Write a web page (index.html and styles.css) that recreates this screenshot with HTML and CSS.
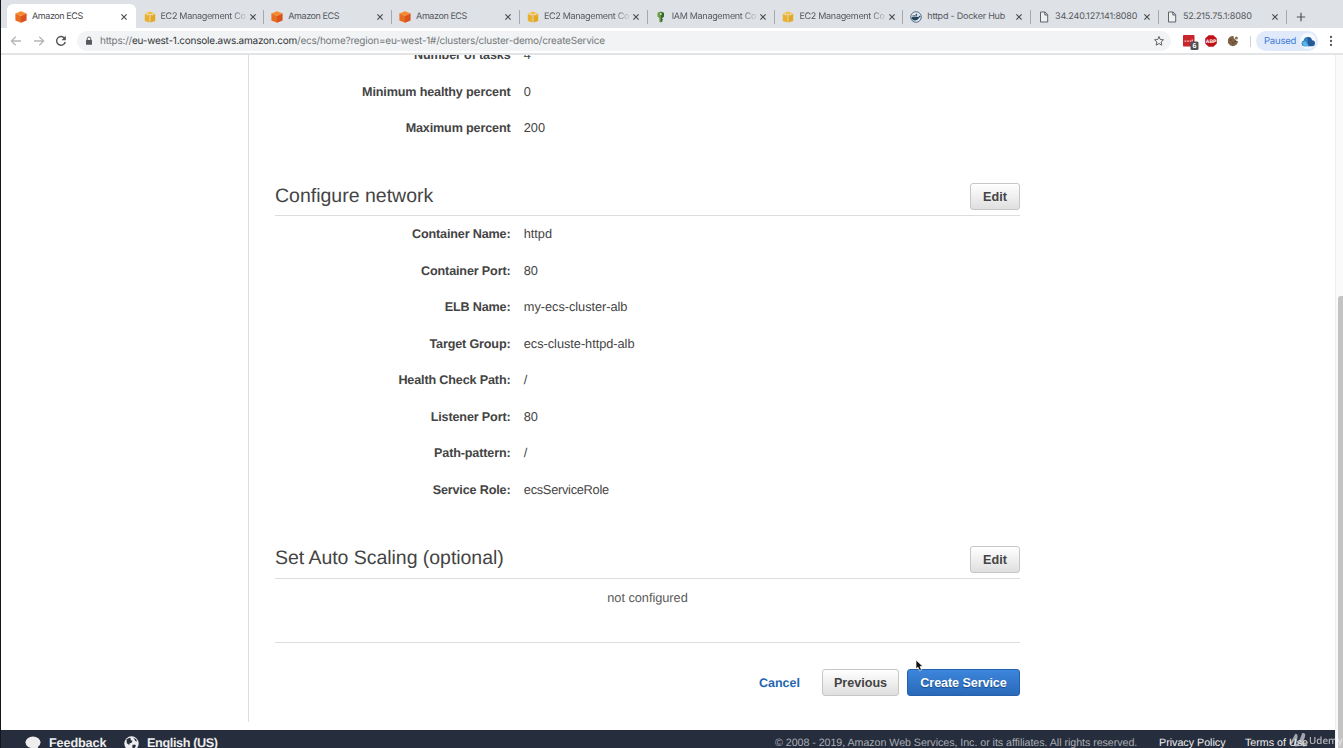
FILE: index.html
```
<!DOCTYPE html>
<html lang="en">
<head>
<meta charset="utf-8">
<title>Amazon ECS</title>
<link rel="stylesheet" href="styles.css">
</head>
<body>
<svg class="defs" width="0" height="0" aria-hidden="true">
  <symbol id="ecs" viewBox="0 0 12 12"><path fill="#f58a2a" d="M6 .3 11.6 2.5 6 5 .4 2.5z"/><path fill="#e96b1f" d="M.4 2.5 6 5v6.8L.4 9.6z"/><path fill="#d9531e" d="M11.6 2.5 6 5v6.8l5.6-2.2z"/></symbol>
  <symbol id="ec2" viewBox="0 0 12 12"><path fill="#f3bf45" d="M1 2.2 6 .5l5 1.7L6 3.6z"/><path fill="#eab02d" d="M.8 3 5.6 4.2v7.3L.8 10z"/><path fill="#e5a823" d="M11.2 3 6.4 4.2v7.3l4.8-1.5z"/><path d="M3.3 1.5v3M8.7 1.5v3" stroke="#f9dc90" stroke-width=".8"/></symbol>
  <symbol id="iam" viewBox="0 0 12 12"><path fill="#6a9d3b" d="M2.500 1.800 5.500.5v11L4.300 10.600V7L2.500 5.800z"/><path fill="#39692a" d="M5.500.5 9 1.800v4L7.200 7v1l1 .7-1 .8.4.8-2.100 1.200z"/><circle cx="5.800" cy="3" r="1" fill="#cfe0bd"/></symbol>
  <symbol id="docker" viewBox="0 0 12 12"><circle cx="6" cy="6" r="5.3" fill="#e4eaee" stroke="#44617a" stroke-width=".9"/><path fill="#254760" d="M1.5 6h6.8c.6 0 .7-.8.4-1.4 1 .1 1.2.8 1.9.9-.2.8-1 1-1.5 1C8.300 8.700 6.800 9.400 4.900 9.400 2.800 9.400 1.600 8.300 1.500 6zM2.600 4.300h1.300v1.200H2.600zm1.600 0h1.300v1.200H4.200zm1.600 0h1.300v1.200H5.800zM5.800 2.800h1.300V4H5.800z"/></symbol>
  <symbol id="file" viewBox="0 0 12 12"><path fill="#eef0f2" stroke="#5f6368" stroke-width="1" d="M2.500 1h4.600l2.600 2.700v7.300H2.500zM6.800 1v3h2.900"/></symbol>
  <symbol id="close" viewBox="0 0 8 8"><path d="m1.400 1.400 5.200 5.200m0-5.200L1.400 6.600" stroke="#4a4d51" stroke-width="1.150"/></symbol>
</svg>

<div class="window">
  <header class="tabs">
    <div class="tab active"><svg class="fav"><use href="#ecs"/></svg><span class="title tight">Amazon ECS</span><svg class="x"><use href="#close"/></svg></div>
    <div class="tab"><svg class="fav"><use href="#ec2"/></svg><span class="title fade">EC2 Management Co</span><svg class="x"><use href="#close"/></svg></div>
    <div class="tab"><svg class="fav"><use href="#ecs"/></svg><span class="title tight">Amazon ECS</span><svg class="x"><use href="#close"/></svg></div>
    <div class="tab"><svg class="fav"><use href="#ecs"/></svg><span class="title tight">Amazon ECS</span><svg class="x"><use href="#close"/></svg></div>
    <div class="tab"><svg class="fav"><use href="#ec2"/></svg><span class="title fade">EC2 Management Co</span><svg class="x"><use href="#close"/></svg></div>
    <div class="tab"><svg class="fav"><use href="#iam"/></svg><span class="title fade">IAM Management Co</span><svg class="x"><use href="#close"/></svg></div>
    <div class="tab"><svg class="fav"><use href="#ec2"/></svg><span class="title fade">EC2 Management Co</span><svg class="x"><use href="#close"/></svg></div>
    <div class="tab"><svg class="fav"><use href="#docker"/></svg><span class="title">httpd - Docker Hub</span><svg class="x"><use href="#close"/></svg></div>
    <div class="tab"><svg class="fav"><use href="#file"/></svg><span class="title num">34.240.127.141:8080</span><svg class="x"><use href="#close"/></svg></div>
    <div class="tab"><svg class="fav"><use href="#file"/></svg><span class="title num">52.215.75.1:8080</span><svg class="x"><use href="#close"/></svg></div>
    <div class="newtab"><svg width="10" height="10" viewBox="0 0 10 10"><path d="M5 .8v8.400M.8 5h8.400" stroke="#505357" stroke-width="1.200"/></svg></div>
  </header>

  <div class="toolbar">
    <nav class="nav">
      <svg width="12" height="12" viewBox="0 0 12 12"><path d="M11 6H1.500M5.700 1.700 1.400 6l4.300 4.300" fill="none" stroke="#b4b6b9" stroke-width="1.300"/></svg>
      <svg width="12" height="12" viewBox="0 0 12 12"><path d="M1 6h9.500M6.300 1.700 10.600 6l-4.300 4.300" fill="none" stroke="#b4b6b9" stroke-width="1.300"/></svg>
      <svg width="12" height="12" viewBox="0 0 12 12"><path d="M9.700 3.400A4.400 4.400 0 1 0 10.300 7" fill="none" stroke="#505357" stroke-width="1.400"/><path d="M10.800.8v4.400H6.400z" fill="#505357"/></svg>
    </nav>
    <div class="omnibox">
      <svg width="8" height="10" viewBox="0 0 8 10"><path d="M2.200 4.200V2.800a1.800 1.800 0 0 1 3.600 0v1.400" fill="none" stroke="#55585c" stroke-width="1"/><rect x="1" y="3.900" width="6" height="4.900" rx=".5" fill="#55585c"/></svg>
      <span class="url">https://<b>eu-west-1.console.aws.amazon.com</b>/ecs/home?region=eu-west-1#/clusters/cluster-demo/createService</span>
      <svg class="star" width="12" height="12" viewBox="0 0 12 12"><path d="m6 1.500 1.300 3 3.200.3-2.400 2.200.7 3.200L6 8.500l-2.800 1.700.7-3.200-2.400-2.200 3.200-.3z" fill="none" stroke="#5f6368" stroke-width="1"/></svg>
    </div>
    <div class="ext">
      <svg width="16" height="16" viewBox="0 0 16 16"><rect width="11.500" height="11.500" y="1" rx=".8" fill="#c9252d"/><path d="M1.500 7.200h1.800m.8 0h1.800m.8 0h1.500m1-1.700v2" stroke="#f3c1c1" stroke-width="1.200"/><rect x="7.500" y="7.500" width="8" height="8.500" rx="1.500" fill="#4f5355"/><text class="count" x="9.600" y="14.300">6</text></svg>
      <svg width="12" height="12" viewBox="0 0 12 12"><path fill="#c01018" d="M3.600.2h4.800l3.400 3.400v4.800l-3.400 3.400H3.600L.2 8.400V3.600z"/><text class="abp" x=".8" y="7.900">ABP</text></svg>
      <svg width="12" height="12" viewBox="0 0 12 12"><path fill="#806344" d="M6.500 1A5.100 5.100 0 1 0 11 6.300L9.500 5.800 8.200 4.500 6.800 3z"/><circle cx="9.400" cy="3" r="1.500" fill="#8b7355"/><path d="M3 5h1.500M5 8h1.500M7.500 6.500H9" stroke="#4b3826" stroke-width="1.200"/></svg>
    </div>
    <div class="profile"><span>Paused</span><i><svg width="14" height="11" viewBox="0 0 14 11"><path fill="#2f83c9" d="M3 10.200A2.900 2.900 0 0 1 2.700 4.500 4 4 0 0 1 7 1v9.200z"/><path fill="#245a9b" d="M6.500 1.100A3.900 3.900 0 0 1 11 4.200a3 3 0 0 1 0 6H7z"/><path fill="#5bb3e6" d="M1 6.500 4.500 5l3.400 5.200H3z"/></svg></i></div>
    <svg class="menu" width="4" height="12" viewBox="0 0 4 12"><g fill="#55585c"><circle cx="2" cy="2" r="1.150"/><circle cx="2" cy="6" r="1.150"/><circle cx="2" cy="10" r="1.150"/></g></svg>
  </div>

  <div class="viewport">
    <div class="page">
      <div class="columns">
        <aside class="side"></aside>
        <main class="content">
          <dl class="rows top">
            <dt>Number of tasks</dt><dd>4</dd>
            <dt>Minimum healthy percent</dt><dd>0</dd>
            <dt>Maximum percent</dt><dd>200</dd>
          </dl>
          <div class="section-head"><h2>Configure network</h2><button class="btn edit">Edit</button></div>
          <dl class="rows">
            <dt>Container Name:</dt><dd>httpd</dd>
            <dt>Container Port:</dt><dd>80</dd>
            <dt>ELB Name:</dt><dd>my-ecs-cluster-alb</dd>
            <dt>Target Group:</dt><dd>ecs-cluste-httpd-alb</dd>
            <dt>Health Check Path:</dt><dd>/</dd>
            <dt>Listener Port:</dt><dd>80</dd>
            <dt>Path-pattern:</dt><dd>/</dd>
            <dt>Service Role:</dt><dd class="role">ecsServiceRole</dd>
          </dl>
          <div class="section-head second"><h2>Set Auto Scaling (optional)</h2><button class="btn edit">Edit</button></div>
          <p class="empty">not configured</p>
          <div class="actions"><a class="cancel">Cancel</a><button class="btn prev">Previous</button><button class="btn primary">Create Service</button></div>
        </main>
      </div>
      <footer class="footer">
        <svg class="bubble" width="16" height="15" viewBox="0 0 16 15"><ellipse cx="8" cy="6.300" rx="7.500" ry="5.900" fill="#eee"/><path d="m9 11 4.500 3-1-5z" fill="#eee"/></svg>
        <span class="feedback">Feedback</span>
        <svg class="globe" width="15" height="15" viewBox="0 0 15 15"><circle cx="7.500" cy="7.500" r="7.200" fill="#eee"/><path fill="#2a3040" d="m2.500 3.200 3-1.500 1.500.8-.5 1.500 2 .8-.9 2-2.100.6-.2 1.700L2.800 7.300zM9 1.400l3.200 1.800.8 2.300-1.700-.5-.9-1.700zM8.300 9l2.500-.5 1.200 1.200-2 3.500-1.500-1z"/></svg>
        <span class="lang">English (US)</span>
        <span class="copy">© 2008 - 2019, Amazon Web Services, Inc. or its affiliates. All rights reserved.</span>
        <span class="privacy">Privacy Policy</span>
        <span class="terms">Terms of Use</span>
      </footer>
    </div>
    <div class="scroll"><div class="thumb"></div></div>
  </div>
  <div class="watermark"><svg width="19" height="16" viewBox="0 0 19 16"><path d="M1 12c3-2 4-6 6-9 2 1-1 6-1 9 0 3 3 1 5-2l3-8c3 0-1 6-1 9 0 3 3 3 4 1" fill="none" stroke="#e4e6e9" stroke-width="2.200"/></svg><span>Udemy</span></div>
  <svg class="cursor" width="10" height="14" viewBox="0 0 10 14"><path d="M1 1v9l2-1.800 1.500 3.500 2-.9L5 7.500h3z" fill="#111" stroke="#fff" stroke-width=".7"/></svg>
</div>
</body>
</html>
```
FILE: styles.css
```
* { box-sizing: border-box; }
body { margin: 0; font-family: "Liberation Sans", Arial, sans-serif; color: #444; overflow: hidden; text-rendering: geometricPrecision; }
svg { display: block; flex: none; }
.defs { position: absolute; }
.window { position: relative; display: flex; flex-direction: column; width: 1343px; height: 748px; border-left: 1px solid #14161b; background: #fff; overflow: hidden; }

.tabs { display: flex; flex: none; height: 28px; padding-left: 6px; background: #dee1e6; font-family: Inter, sans-serif; }
.tab { display: flex; align-items: center; flex: none; width: 127.800px; height: 28px; padding: 5px 7px 0 8px; position: relative; }
.tab::after { content: ""; position: absolute; right: -1px; top: 10px; width: 1px; height: 14px; background: #a6a9ae; }
.tab.active { width: 128.500px; height: 24px; margin-top: 4px; padding: 1px 8px 0 8px; background: #fff; border-radius: 6px 6px 0 0; }
.tab.active::after { display: none; }
.fav { width: 12px; height: 12px; margin-right: 5px; }
.title { flex: 1; font-size: 9px; line-height: 12px; letter-spacing: -.22px; color: #55585d; white-space: nowrap; }
.title.tight { letter-spacing: -.42px; }
.title.fade { letter-spacing: -.3px; }
.title.num { letter-spacing: -.15px; }
.active .title { color: #45484c; }
.fade { -webkit-mask-image: linear-gradient(90deg, #000 82%, rgba(0,0,0,.2)); mask-image: linear-gradient(90deg, #000 82%, rgba(0,0,0,.2)); }
.x { width: 8px; height: 8px; margin-left: 3px; }
.newtab { padding: 12px 0 0 10px; }

.toolbar { display: flex; flex: none; align-items: center; height: 27px; padding: 1px 0 0 9px; border-bottom: 2px solid #e3e4e5; background: #fff; font-family: Inter, sans-serif; }
.nav { display: flex; gap: 10.500px; width: 67px; }
.omnibox { display: flex; align-items: center; width: 1094px; height: 20px; padding: 0 6px 0 8px; border-radius: 10px; background: #f1f3f4; }
.url { flex: 1; padding-left: 7px; font-size: 10px; line-height: 20px; letter-spacing: -.225px; color: #73777b; white-space: nowrap; }
.url b { font-weight: 400; color: #33363a; }
.ext { display: flex; align-items: center; gap: 10px; width: 68px; margin-left: 12px; }
.ext svg:first-child { margin: 2px -4px 0 0; }
.count { font: bold 7px "Liberation Sans", sans-serif; fill: #fff; }
.abp { font: bold 5px "Liberation Sans", sans-serif; fill: #fff; }
.profile { display: flex; align-items: center; justify-content: space-between; width: 62px; height: 20px; margin-left: 5px; padding: 0 2px 0 8px; border-radius: 10px; background: #e1eafb; color: #3d7bd8; font-size: 9.500px; letter-spacing: -.2px; position: relative; }
.profile::before { content: ""; position: absolute; left: -6px; top: 5px; width: 1px; height: 11px; background: #cfd1d4; }
.profile i { display: flex; align-items: center; justify-content: center; width: 16px; height: 16px; border-radius: 50%; background: #f5f8fd; }
.menu { margin-left: 11px; }

.viewport { display: flex; flex: 1; min-height: 0; overflow: hidden; }
.page { display: flex; flex-direction: column; width: 1334px; }
.columns { display: flex; flex: none; height: 667px; }
.side { width: 248px; border-right: 1px solid #ddd; }
.content { width: 771px; padding-left: 26px; }
.rows { display: grid; grid-template-columns: 235.500px 1fr; column-gap: 13.300px; grid-auto-rows: 36.570px; margin: 0; font-size: 12.800px; line-height: 18px; }
.rows.top { height: 123px; margin-top: -9px; }
.rows dt { font-weight: 700; text-align: right; font-size: 12.600px; letter-spacing: -.15px; }
.rows dd { margin: 0; letter-spacing: -.05px; }
.rows .role { letter-spacing: -.28px; }
.section-head { display: flex; justify-content: space-between; height: 47px; border-bottom: 1px solid #ddd; }
.section-head.second { height: 48px; }
.section-head + .rows { padding-top: 9px; height: 315px; }
.section-head h2 { margin: 14px 0 0; font-size: 19.500px; line-height: 26px; font-weight: 400; }
.second h2 { letter-spacing: -.04px; }
.btn { display: block; height: 27px; padding: 1px 0 0; border: 1px solid #c6c6c6; border-radius: 3px; background: linear-gradient(#fff, #dfdfdf); color: #444; font: bold 12.600px/24px "Liberation Sans", sans-serif; }
.edit { width: 50px; margin-top: 14px; }
.second .edit { margin-top: 15px; }
.empty { height: 64px; margin: 0; padding-top: 10px; border-bottom: 1px solid #ddd; text-align: center; font-size: 12.800px; letter-spacing: -.05px; line-height: 18px; color: #5b5b5b; }
.actions { display: flex; justify-content: flex-end; padding-top: 26px; }
.cancel { margin-right: 22px; font-size: 12.500px; line-height: 28px; font-weight: 700; color: #1f66b0; }
.prev { width: 77px; margin-right: 8px; }
.primary { width: 113px; border-color: #2460ab; background: linear-gradient(#3c86dc, #2a69b9); color: #fff; letter-spacing: -.08px; text-shadow: 0 1px 1px #174a87; }

.footer { display: flex; flex: none; align-items: flex-start; height: 30px; margin-top: 8px; padding-left: 24px; background: #262d3d; color: #eee; font-size: 12.700px; line-height: 16px; white-space: nowrap; }
.bubble { margin-top: 6px; }
.globe { margin-top: 6px; margin-left: 16px; }
.feedback, .lang { padding: 5px 0 0 8px; font-weight: 700; letter-spacing: -.15px; }
.feedback { width: 67px; }
.lang { width: 636px; letter-spacing: -.4px; }
.copy, .privacy, .terms { padding-top: 5px; font-size: 10.700px; }
.copy { width: 384px; letter-spacing: -.05px; color: #a9adb3; }
.privacy { width: 86px; }
.scroll { width: 8px; padding: 241px 0 0 2px; background: #fafafa; border-left: 1px solid #eee; }
.thumb { height: 460px; border-radius: 3px 0 0 0; background: #c3c3c3; }
.watermark { position: absolute; left: 1288px; top: 732px; display: flex; align-items: flex-start; gap: 1px; opacity: .65; color: #f4f5f6; font: 600 9.800px/18px "Open Sans", sans-serif; }
.cursor { position: absolute; left: 914px; top: 659px; }
```
